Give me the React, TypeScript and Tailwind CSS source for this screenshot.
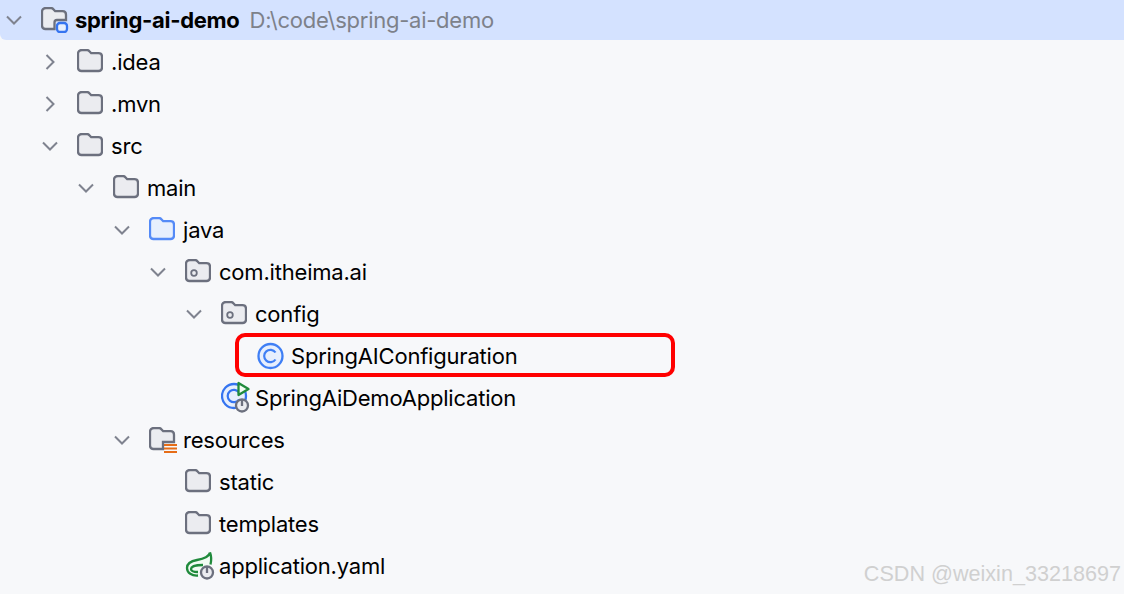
import { ReactNode } from "react";

const Chevron = ({ open }: { open: boolean }) => (
  <svg width="20" height="20" viewBox="0 0 20 20" fill="none" stroke="#7f838f" strokeWidth="2">
    {open ? <path d="M3 6.500l7 7 7-7" /> : <path d="M6.500 3l7 7-7 7" />}
  </svg>
);

const FOLDER = "M1 5C1 2.500 2.500 1 5 1h5c1.200 0 1.800.5 2.600 1.400l1.600 1.800h7.300c2 0 3.500 1.500 3.500 3.500V18.500c0 2-1.500 3.500-3.500 3.500H4.500C2.500 22 1 20.500 1 18.500z";

const Folder = ({ blue }: { blue?: boolean }) => (
  <svg width="26" height="26" viewBox="0 0 26 26" fill={blue ? "#e7effd" : "#ebecf0"} stroke={blue ? "#548af7" : "#6c707e"} strokeWidth="2.300">
    <path d={FOLDER} />
  </svg>
);

const PackageFolder = () => (
  <svg width="26" height="26" viewBox="0 0 26 26" fill="#ebecf0" stroke="#6c707e" strokeWidth="2.300">
    <path d={FOLDER} />
    <circle cx="9" cy="14" r="2.800" fill="none" strokeWidth="1.800" />
  </svg>
);

const RootFolder = () => (
  <svg width="28" height="26" viewBox="0 0 28 26" fill="none">
    <path d="M1 5C1 2.500 2.500 1 5 1h5c1.200 0 1.800.5 2.600 1.400l1.600 1.800h7.300c2 0 3.500 1.500 3.500 3.500V13H16c-1.500 0-2.500 1-2.500 2.500V22H4.500C2.500 22 1 20.500 1 18.500z" fill="#ebecf0" stroke="#6c707e" strokeWidth="2.300" />
    <rect x="16" y="16" width="10" height="9" rx="3" fill="#e7effd" stroke="#3574f0" strokeWidth="2.300" />
  </svg>
);

const ResourceFolder = () => (
  <svg width="28" height="26" viewBox="0 0 28 26" fill="none">
    <path d="M1 5C1 2.500 2.500 1 5 1h5c1.200 0 1.800.5 2.600 1.400l1.600 1.800h7.300c2 0 3.500 1.500 3.500 3.500V15H14v7H4.500C2.500 22 1 20.500 1 18.500z" fill="#ebecf0" stroke="#6c707e" strokeWidth="2.300" />
    <path d="M15 18h13M15 21.500h13M15 25h13" stroke="#e66d17" strokeWidth="2" />
  </svg>
);

const ClassIcon = () => (
  <svg width="28" height="28" viewBox="0 0 28 28" fill="#e7effd" stroke="#3f7ff5">
    <circle cx="13.500" cy="14" r="12" strokeWidth="2.300" />
    <path d="M18.500 10.500a6.200 6.200 0 1 0 0 7" fill="none" strokeWidth="2.200" />
  </svg>
);

const RunClassIcon = () => (
  <svg width="34" height="34" viewBox="0 0 34 34" fill="none">
    <circle cx="13" cy="15" r="12" fill="#e7effd" stroke="#3574f0" strokeWidth="2.300" />
    <path d="M18 11.500a6.200 6.200 0 1 0 0 7" stroke="#3574f0" strokeWidth="2.200" />
    <path d="M17.500 2v12l10-6z" fill="#f2fcf3" stroke="#208a3c" strokeWidth="2.300" strokeLinejoin="round" />
    <circle cx="21" cy="24.500" r="6" fill="#ebecf0" stroke="#6c707e" strokeWidth="2.300" />
    <path d="M21 19v6" stroke="#6c707e" strokeWidth="2.300" />
  </svg>
);

const SpringFile = () => (
  <svg width="30" height="30" viewBox="0 0 30 30" fill="none">
    <path d="M25 1.500C24 6 18 8 12 9 6 10 2 13 2 17c0 5 5 8 11 7.500l10-6c3-4 4-10 2-17z" fill="#f2fcf3" />
    <path d="M25 1.500C24 6 18 8 12 9 6 10 2 13 2 17c0 5 5 8 11 7.500M25 1.500c1.500 4 1.500 8 .5 12" stroke="#208a3c" strokeWidth="2.300" strokeLinejoin="round" />
    <path d="M18 14c-6 0-12 1-12 4 0 2 3 3 7 3" stroke="#208a3c" strokeWidth="2.300" />
    <circle cx="22" cy="21.500" r="6" fill="#ebecf0" stroke="#6c707e" strokeWidth="2.300" />
    <path d="M22 16v6" stroke="#6c707e" strokeWidth="2.300" />
  </svg>
);

type Node = { depth: number; name: string; icon: ReactNode; open?: boolean };

const NODES: Node[] = [
  { depth: 1, name: ".idea", icon: <Folder />, open: false },
  { depth: 1, name: ".mvn", icon: <Folder />, open: false },
  { depth: 1, name: "src", icon: <Folder />, open: true },
  { depth: 2, name: "main", icon: <Folder />, open: true },
  { depth: 3, name: "java", icon: <Folder blue />, open: true },
  { depth: 4, name: "com.itheima.ai", icon: <PackageFolder />, open: true },
  { depth: 5, name: "config", icon: <PackageFolder />, open: true },
  { depth: 6, name: "SpringAIConfiguration", icon: <ClassIcon /> },
  { depth: 5, name: "SpringAiDemoApplication", icon: <RunClassIcon /> },
  { depth: 3, name: "resources", icon: <ResourceFolder />, open: true },
  { depth: 4, name: "static", icon: <Folder /> },
  { depth: 4, name: "templates", icon: <Folder /> },
  { depth: 4, name: "application.yaml", icon: <SpringFile /> },
];

const Row = ({ depth, name, icon, open }: Node) => (
  <div className="flex h-[42px] items-center" style={{ paddingLeft: depth * 36 + 4 }}>
    <div className="flex w-5 shrink-0 justify-center">
      {open !== undefined && <Chevron open={open} />}
    </div>
    <div className="ml-[17px] flex w-[26px] shrink-0 items-center">
      <div className="shrink-0">{icon}</div>
    </div>
    <span className="ml-2 whitespace-nowrap">{name}</span>
  </div>
);

export default function App() {
  return (
    <div className="relative h-[594px] w-[1124px] overflow-hidden bg-[#f7f8fa] font-['Inter','Noto_Sans',sans-serif] text-[22px] tracking-[-0.2px] text-black">
      <div className="flex h-10 items-center rounded-bl-md bg-[#d4e2ff] pl-1">
        <div className="flex w-5 justify-center">
          <Chevron open />
        </div>
        <div className="ml-[17px] w-[26px]">
          <RootFolder />
        </div>
        <span className="ml-2 font-bold tracking-[-0.3px]">spring-ai-demo</span>
        <span className="ml-[10px] tracking-[-0.25px] text-[#7d818a]">D:\code\spring-ai-demo</span>
      </div>
      <div className="pt-px">
        {NODES.map(n => (
          <Row key={n.name} {...n} />
        ))}
      </div>
      {/* highlight drawn over the tree */}
      <div className="absolute left-[235px] top-[333px] h-11 w-[440px] rounded-[10px] border-4 border-[#ff0000]" />
      <div className="absolute right-[3px] top-[562px] font-['Liberation_Sans',sans-serif] text-[21.6px] leading-6 tracking-normal text-[#d0d0d0]">
        CSDN @weixin_33218697
      </div>
    </div>
  );
}
